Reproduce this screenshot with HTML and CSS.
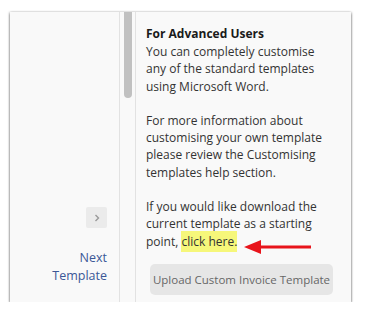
FILE: index.html
```html
<!DOCTYPE html>
<html lang="en">
<head>
    <meta charset="UTF-8">
    <title>Custom Template</title>
    <link rel="stylesheet" href="styles.css">
</head>
<body>
    <div class="panel">
        <div class="nav">
            <span class="next-btn">
                <svg width="8" height="10" viewBox="0 0 8 10"><path d="M2.5 2 L5.5 5 L2.5 8" fill="none" stroke="#999" stroke-width="1.4"/></svg>
            </span>
            <a href="#" class="next-link">Next<br>Template</a>
        </div>
        <div class="scroll">
            <span class="thumb"></span>
        </div>
        <div class="content">
            <h3>For Advanced Users</h3>
            <p>You can completely customise any of the standard templates using Microsoft Word.</p>
            <p>For more information about customising your own template please review the Customising templates help section.</p>
            <p class="last">If you would like download the current template as a starting point, <a href="#" class="hl">click here.</a>
                <svg class="arrow" width="70" height="16" viewBox="0 0 70 16"><path d="M18 6.5 H68 V9.5 H18 V15 L1 8 L18 1 Z" fill="#e8141b"/></svg>
            </p>
            <button class="upload">Upload Custom Invoice Template</button>
        </div>
    </div>
</body>
</html>
```
FILE: styles.css
```css
body {
    margin:0; background:#fff;
    font-family:"Open Sans", "Noto Sans", sans-serif;
}
.panel {
    display:flex;
    margin:12px 0 0 10px;
    width:341px; height:290px;
    background:#f9f9f9;
    box-shadow:0 2px 2px rgba(0,0,0,0.45), -1px 0 2px rgba(0,0,0,0.2), 1px 0 2px rgba(0,0,0,0.2);
}
.nav {
    width:110px;
    border-right:1px solid #e2e2e2;
    display:flex; flex-direction:column; align-items:flex-end;
    padding:195px 12px 0 0;
    box-sizing:border-box;
}
.next-btn {
    width:21px; height:21px;
    background:#ebebeb; border-radius:2px;
    display:flex; align-items:center; justify-content:center;
}
.next-link {
    margin-top:21px;
    text-align:right;
    color:#3b5797; text-decoration:none;
    font-size:12.5px; line-height:18px;
}
.scroll {
    width:16px;
    border-right:1px solid #e2e2e2;
    padding-left:4px;
    box-sizing:border-box;
}
.thumb {
    display:block;
    width:8px; height:86px;
    background:#c1c1c1;
    border-radius:0 0 4px 4px;
}
.content {
    width:182px;
    padding:13px 0 0 10px;
    color:#333;
    font-size:12px; line-height:17.3px;
}
.content h3 {
    margin:0 0 1px;
    font-size:12px; line-height:17px;
    color:#1a1a1a;
}
.content p {margin:0 0 17px;}
.content p.last {margin-bottom:14px; position:relative;}
.hl {
    background:#f6f77a;
    color:#333; text-decoration:none;
    padding:2px 0;
}
.arrow {
    position:absolute;
    left:97px; bottom:-5px;
}
.upload {
    margin-left:4px;
    width:183px; height:31px;
    border:none; border-radius:5px;
    background:#e6e6e6;
    color:#666;
    font-family:inherit; font-size:11.5px;
    padding:0;
}
```
